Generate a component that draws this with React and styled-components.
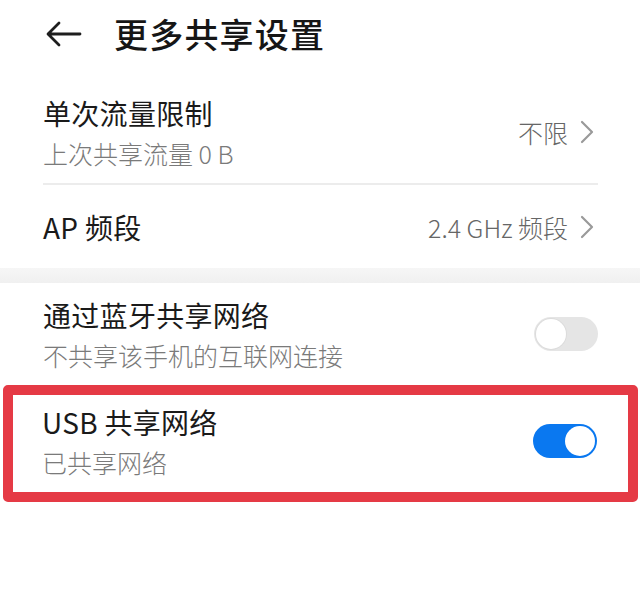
import styled, { createGlobalStyle } from 'styled-components';

const GlobalStyle = createGlobalStyle`
  html, body {
    margin: 0;
    padding: 0;
    background: #ffffff;
  }
  body {
    font-family: "Noto Sans CJK SC", "Noto Sans", sans-serif;
    color: #1b1b1b;
  }
  * {
    box-sizing: border-box;
  }
`;

const Page = styled.div`
  width: 640px;
  height: 606px;
  background: #ffffff;
  overflow: hidden;
`;

const Header = styled.div`
  height: 80px;
  display: flex;
  align-items: flex-start;
  padding: 14px 0 0 46px;
  gap: 32px;
`;

const BackButton = styled.div`
  width: 36px;
  height: 40px;
  display: flex;
  align-items: center;
  justify-content: center;
`;

const Title = styled.h1`
  margin: 0;
  font-size: 34px;
  line-height: 40px;
  font-weight: 500;
  letter-spacing: 1.2px;
  color: #161616;
`;

const Section = styled.div`
  padding: 0 42px 0 43px;
`;

const Row = styled.div`
  height: ${p => p.$height}px;
  display: flex;
  align-items: center;
  justify-content: space-between;
  padding-bottom: ${p => p.$lift || 0}px;
  border-bottom: ${p => (p.$divider ? '2px solid #ececec' : 'none')};
`;

const TextBlock = styled.div`
  display: flex;
  flex-direction: column;
  gap: 8px;
`;

const RowTitle = styled.div`
  font-size: 28px;
  line-height: 34px;
  color: #1a1a1a;
  letter-spacing: 0.3px;
`;

const RowSub = styled.div`
  font-size: 25px;
  line-height: 30px;
  font-weight: 300;
  color: #7a7a7a;
`;

const Value = styled.div`
  display: flex;
  align-items: center;
  gap: 12px;
  margin-right: 4px;
  font-size: 25px;
  line-height: 30px;
  font-weight: 300;
  color: #666666;
`;

const Band = styled.div`
  height: 15px;
  background: linear-gradient(#f6f6f6, #f0f0f0);
`;

const Frame = styled.div`
  margin: 0 2px 0 3px;
  border: 10px solid #e53a45;
  border-radius: 5px;
  padding: 0 31px 0 29px;
`;

const Switch = styled.div`
  width: 64px;
  height: 34px;
  border-radius: 17px;
  background: ${p => (p.$on ? '#0a78f0' : '#e5e5e5')};
  display: flex;
  align-items: center;
  justify-content: ${p => (p.$on ? 'flex-end' : 'flex-start')};
  padding: 2px;
  flex-shrink: 0;
`;

const Knob = styled.div`
  width: 30px;
  height: 30px;
  border-radius: 50%;
  background: #ffffff;
  box-shadow: 0 0 0 1px ${p => (p.$on ? '#0a78f0' : '#dcdcdc')};
`;

const Chevron = () => (
  <svg width="14" height="24" viewBox="0 0 14 24" fill="none">
    <path d="M2 2 L12 12 L2 22" stroke="#9a9a9a" strokeWidth="2.2" strokeLinecap="round" strokeLinejoin="round" />
  </svg>
);

const BackArrow = () => (
  <svg width="36" height="26" viewBox="0 0 36 26" fill="none">
    <path d="M34 13 H3 M13 2 L2 13 L13 24" stroke="#1e1e1e" strokeWidth="2.8" strokeLinecap="round" strokeLinejoin="round" />
  </svg>
);

const App = () => {
  return (
    <Page>
      <GlobalStyle />
      <Header>
        <BackButton>
          <BackArrow />
        </BackButton>
        <Title>更多共享设置</Title>
      </Header>

      <Section>
        <Row $height={105} $divider>
          <TextBlock>
            <RowTitle>单次流量限制</RowTitle>
            <RowSub>上次共享流量 0 B</RowSub>
          </TextBlock>
          <Value>
            不限
            <Chevron />
          </Value>
        </Row>
        <Row $height={83}>
          <RowTitle>AP 频段</RowTitle>
          <Value>
            2.4 GHz 频段
            <Chevron />
          </Value>
        </Row>
      </Section>

      <Band />

      <Section>
        <Row $height={102}>
          <TextBlock>
            <RowTitle>通过蓝牙共享网络</RowTitle>
            <RowSub>不共享该手机的互联网连接</RowSub>
          </TextBlock>
          <Switch>
            <Knob />
          </Switch>
        </Row>
      </Section>

      <Frame>
        <Row $height={97} $lift={6}>
          <TextBlock>
            <RowTitle>USB 共享网络</RowTitle>
            <RowSub>已共享网络</RowSub>
          </TextBlock>
          <Switch $on>
            <Knob $on />
          </Switch>
        </Row>
      </Frame>
    </Page>
  );
};

export default App;
